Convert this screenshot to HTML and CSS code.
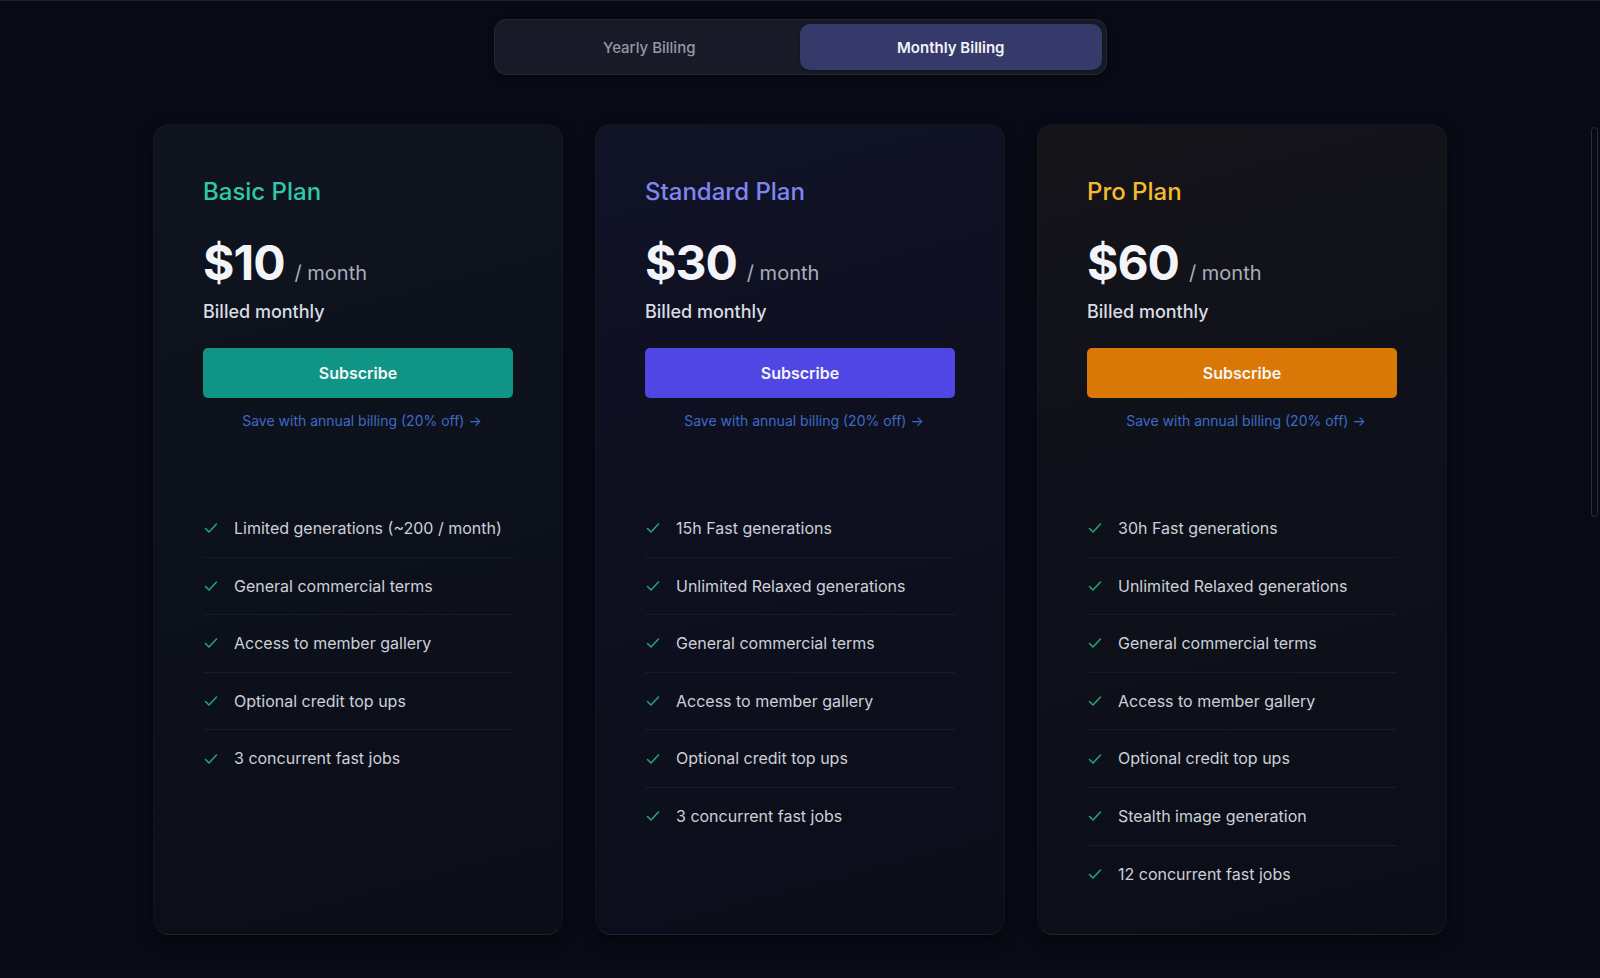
FILE: index.html
```html
<!DOCTYPE html>
<html lang="en">
<head>
<meta charset="utf-8">
<title>Pricing</title>
<link rel="stylesheet" href="styles.css">
</head>
<body>
<div class="page">
  <div class="toggle">
    <button class="tab">Yearly Billing</button>
    <button class="tab active">Monthly Billing</button>
  </div>

  <div class="plans">
    <section class="card basic">
      <h2 class="plan-name">Basic Plan</h2>
      <div class="price"><span class="amount">$10</span><span class="per">/ month</span></div>
      <p class="billed">Billed monthly</p>
      <button class="subscribe">Subscribe</button>
      <a class="save" href="#">Save with annual billing (20% off) &rarr;</a>
      <ul class="features">
        <li><svg class="check" viewBox="0 0 16 16"><path d="M2.5 8.5 6 12l7.5-8"/></svg>Limited generations (~200 / month)</li>
        <li><svg class="check" viewBox="0 0 16 16"><path d="M2.5 8.5 6 12l7.5-8"/></svg>General commercial terms</li>
        <li><svg class="check" viewBox="0 0 16 16"><path d="M2.5 8.5 6 12l7.5-8"/></svg>Access to member gallery</li>
        <li><svg class="check" viewBox="0 0 16 16"><path d="M2.5 8.5 6 12l7.5-8"/></svg>Optional credit top ups</li>
        <li><svg class="check" viewBox="0 0 16 16"><path d="M2.5 8.5 6 12l7.5-8"/></svg>3 concurrent fast jobs</li>
      </ul>
    </section>

    <section class="card standard">
      <h2 class="plan-name">Standard Plan</h2>
      <div class="price"><span class="amount">$30</span><span class="per">/ month</span></div>
      <p class="billed">Billed monthly</p>
      <button class="subscribe">Subscribe</button>
      <a class="save" href="#">Save with annual billing (20% off) &rarr;</a>
      <ul class="features">
        <li><svg class="check" viewBox="0 0 16 16"><path d="M2.5 8.5 6 12l7.5-8"/></svg>15h Fast generations</li>
        <li><svg class="check" viewBox="0 0 16 16"><path d="M2.5 8.5 6 12l7.5-8"/></svg>Unlimited Relaxed generations</li>
        <li><svg class="check" viewBox="0 0 16 16"><path d="M2.5 8.5 6 12l7.5-8"/></svg>General commercial terms</li>
        <li><svg class="check" viewBox="0 0 16 16"><path d="M2.5 8.5 6 12l7.5-8"/></svg>Access to member gallery</li>
        <li><svg class="check" viewBox="0 0 16 16"><path d="M2.5 8.5 6 12l7.5-8"/></svg>Optional credit top ups</li>
        <li><svg class="check" viewBox="0 0 16 16"><path d="M2.5 8.5 6 12l7.5-8"/></svg>3 concurrent fast jobs</li>
      </ul>
    </section>

    <section class="card pro">
      <h2 class="plan-name">Pro Plan</h2>
      <div class="price"><span class="amount">$60</span><span class="per">/ month</span></div>
      <p class="billed">Billed monthly</p>
      <button class="subscribe">Subscribe</button>
      <a class="save" href="#">Save with annual billing (20% off) &rarr;</a>
      <ul class="features">
        <li><svg class="check" viewBox="0 0 16 16"><path d="M2.5 8.5 6 12l7.5-8"/></svg>30h Fast generations</li>
        <li><svg class="check" viewBox="0 0 16 16"><path d="M2.5 8.5 6 12l7.5-8"/></svg>Unlimited Relaxed generations</li>
        <li><svg class="check" viewBox="0 0 16 16"><path d="M2.5 8.5 6 12l7.5-8"/></svg>General commercial terms</li>
        <li><svg class="check" viewBox="0 0 16 16"><path d="M2.5 8.5 6 12l7.5-8"/></svg>Access to member gallery</li>
        <li><svg class="check" viewBox="0 0 16 16"><path d="M2.5 8.5 6 12l7.5-8"/></svg>Optional credit top ups</li>
        <li><svg class="check" viewBox="0 0 16 16"><path d="M2.5 8.5 6 12l7.5-8"/></svg>Stealth image generation</li>
        <li><svg class="check" viewBox="0 0 16 16"><path d="M2.5 8.5 6 12l7.5-8"/></svg>12 concurrent fast jobs</li>
      </ul>
    </section>
  </div>
</div>
<div class="scroll-thumb"></div>
</body>
</html>
```

FILE: styles.css
```css
* { box-sizing: border-box; }

html, body {
  margin: 0;
  padding: 0;
  height: 100%;
  overflow: hidden;
}

body {
  background: #080b15;
  font-family: Inter, "Noto Sans", "Liberation Sans", sans-serif;
  color: #e6e8ee;
}

.page {
  border-top: 1px solid #1d2030;
  padding-top: 18px;
  display: flex;
  flex-direction: column;
  align-items: center;
}

.toggle {
  display: flex;
  width: 613px;
  height: 56px;
  padding: 4px;
  background: #181b27;
  border: 1px solid #222634;
  border-radius: 12px;
  box-shadow: 0 2px 6px rgba(0, 0, 0, 0.4);
}

.tab {
  flex: 1;
  border: 0;
  background: transparent;
  font-family: inherit;
  font-size: 15px;
  font-weight: 500;
  color: #9399a7;
  border-radius: 10px;
  cursor: pointer;
}

.tab.active {
  background: #363a6a;
  color: #f2f3f8;
  font-weight: 600;
  box-shadow: 0 1px 3px rgba(0, 0, 0, 0.35);
}

.plans {
  display: grid;
  grid-template-columns: repeat(3, 410px);
  gap: 32px;
  margin-top: 49px;
}

.card {
  display: flex;
  flex-direction: column;
  padding: 51px 49px 32px;
  border: 1px solid rgba(255, 255, 255, 0.025);
  border-bottom-color: rgba(255, 255, 255, 0.07);
  border-radius: 16px;
  box-shadow: 0 6px 14px rgba(0, 0, 0, 0.45);
}

.card.basic {
  background: linear-gradient(165deg, #0f141e 0%, #0d111c 45%, #0b0e19 100%);
}

.card.standard {
  background: linear-gradient(165deg, #111327 0%, #0e1020 40%, #0b0e19 100%);
}

.card.pro {
  background: linear-gradient(165deg, #151419 0%, #0f111a 40%, #0b0e19 100%);
}

.plan-name {
  margin: 0;
  font-size: 24px;
  line-height: 32px;
  font-weight: 500;
}

.basic .plan-name { color: #2fc9a9; }
.standard .plan-name { color: #7f86f0; }
.pro .plan-name { color: #f6bb2c; }

.price {
  display: flex;
  align-items: baseline;
  margin-top: 31px;
  line-height: 48px;
}

.amount {
  font-size: 48px;
  font-weight: 700;
  letter-spacing: -1px;
  color: #f3f4f8;
}

.per {
  margin-left: 10px;
  font-size: 20px;
  font-weight: 400;
  color: #a9aebb;
}

.billed {
  margin: 1px 0 0;
  font-size: 18px;
  line-height: 28px;
  font-weight: 500;
  color: #d9dce4;
}

.subscribe {
  margin-top: 22px;
  height: 50px;
  border: 0;
  border-radius: 5px;
  font-family: inherit;
  font-size: 16px;
  font-weight: 600;
  color: #f4f5f7;
  cursor: pointer;
}

.basic .subscribe { background: #0f9485; }
.standard .subscribe { background: #4f46e4; }
.pro .subscribe { background: #d97707; }

.save {
  margin-top: 13px;
  text-align: center;
  font-size: 14px;
  line-height: 20px;
  color: #3c6bc7;
  text-decoration: none;
  padding-left: 8px;
}

.features {
  list-style: none;
  margin: 69px 0 0;
  padding: 0;
}

.features li {
  display: flex;
  align-items: center;
  gap: 15px;
  padding: 16px 0;
  font-size: 16px;
  line-height: 24.6px;
  color: #cdd0d8;
  border-bottom: 1px solid #181c28;
}

.features li:last-child {
  border-bottom: 0;
}

.check {
  flex: none;
  width: 16px;
  height: 16px;
  fill: none;
  stroke: #25a07f;
  stroke-width: 1.6;
  stroke-linecap: round;
  stroke-linejoin: round;
}

.scroll-thumb {
  position: fixed;
  right: 2px;
  top: 127px;
  width: 7px;
  height: 390px;
  border: 1px solid #2a2e3c;
  border-radius: 4px;
}
```
